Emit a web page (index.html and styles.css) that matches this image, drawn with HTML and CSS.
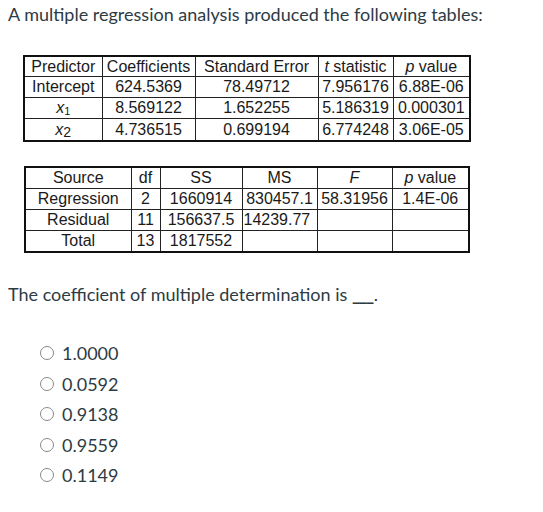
FILE: index.html
```html
<!DOCTYPE html>
<html>
<head>
<meta charset="utf-8">
<link rel="stylesheet" href="styles.css">
</head>
<body>
<div class="page">
  <p class="title">A multiple regression analysis produced the following tables:</p>
  <table class="t1">
    <colgroup><col class="c78"><col class="c93"><col class="c123"><col class="c75"><col class="c77"></colgroup>
    <tr class="r-head"><td>Predictor</td><td>Coefficients</td><td>Standard Error</td><td><i>t</i> statistic</td><td><i>p</i> value</td></tr>
    <tr><td>Intercept</td><td>624.5369</td><td>78.49712</td><td>7.956176</td><td>6.88E-06</td></tr>
    <tr><td><i>x</i><sub>1</sub></td><td>8.569122</td><td>1.652255</td><td>5.186319</td><td>0.000301</td></tr>
    <tr class="r-tall"><td><i>x</i><sub class="big">2</sub></td><td>4.736515</td><td>0.699194</td><td>6.774248</td><td>3.06E-05</td></tr>
  </table>
  <table class="t2">
    <colgroup><col class="c106"><col class="c29"><col class="c82"><col class="c75"><col class="c75"><col class="c77"></colgroup>
    <tr><td>Source</td><td>df</td><td>SS</td><td>MS</td><td><i>F</i></td><td><i>p</i> value</td></tr>
    <tr><td>Regression</td><td>2</td><td>1660914</td><td>830457.1</td><td>58.31956</td><td>1.4E-06</td></tr>
    <tr><td>Residual</td><td>11</td><td>156637.5</td><td class="left">14239.77</td><td></td><td></td></tr>
    <tr><td>Total</td><td>13</td><td>1817552</td><td></td><td></td><td></td></tr>
  </table>
  <p class="question">The coefficient of multiple determination is <span class="blank">___</span>.</p>
  <ul class="options">
    <li><span class="radio"></span><span>1.0000</span></li>
    <li><span class="radio"></span><span>0.0592</span></li>
    <li><span class="radio"></span><span>0.9138</span></li>
    <li><span class="radio"></span><span>0.9559</span></li>
    <li><span class="radio"></span><span>0.1149</span></li>
  </ul>
</div>
</body>
</html>
```
FILE: styles.css
```css
html, body { margin: 0; padding: 0; background: #fff; }
.page {
  padding: 0 0 0 8px;
  font-family: Lato, "Open Sans", sans-serif;
  color: #2d3b45;
}
.title {
  margin: 0;
  padding-top: 2px;
  font-size: 18px;
  line-height: 24px;
}
table {
  border-collapse: collapse;
  table-layout: fixed;
  font-family: "Liberation Sans", Arial, sans-serif;
  font-size: 16px;
  color: #1a1a1a;
  border: 2px solid #111;
}
td {
  border: 1px solid #222;
  padding: 0;
  text-align: center;
  white-space: nowrap;
  overflow: hidden;
  line-height: 18px;
  height: 20px;
}
td.left { text-align: left; padding-left: 1px; }
.t1 { margin: 29px 0 0 15px; width: 446px; }
.t1 .r-head td { height: 19px; }
.t1 .r-tall td { height: 21px; }
.t2 { margin: 24px 0 0 16px; width: 444px; }
.t2 td { height: 20px; }
sub { font-size: 11px; vertical-align: -2px; line-height: 0; }
sub.big { font-size: 14px; }
.c78 { width: 78px; } .c93 { width: 93px; } .c123 { width: 123px; }
.c75 { width: 75px; } .c77 { width: 77px; } .c106 { width: 106px; }
.c29 { width: 29px; } .c82 { width: 82px; }
.question {
  margin: 29px 0 0 0;
  font-size: 18px;
  line-height: 24px;
}
.blank { font-weight: bold; letter-spacing: -1.5px; margin-right: 1px; }
.options {
  list-style: none;
  margin: 32px 0 0 32px;
  padding: 0;
  font-size: 18px;
}
.options li {
  display: flex;
  align-items: center;
  gap: 8px;
  height: 30.5px;
}
.radio {
  width: 14px;
  height: 14px;
  border: 1px solid #8a8a8a;
  border-radius: 50%;
  box-sizing: border-box;
}
```
